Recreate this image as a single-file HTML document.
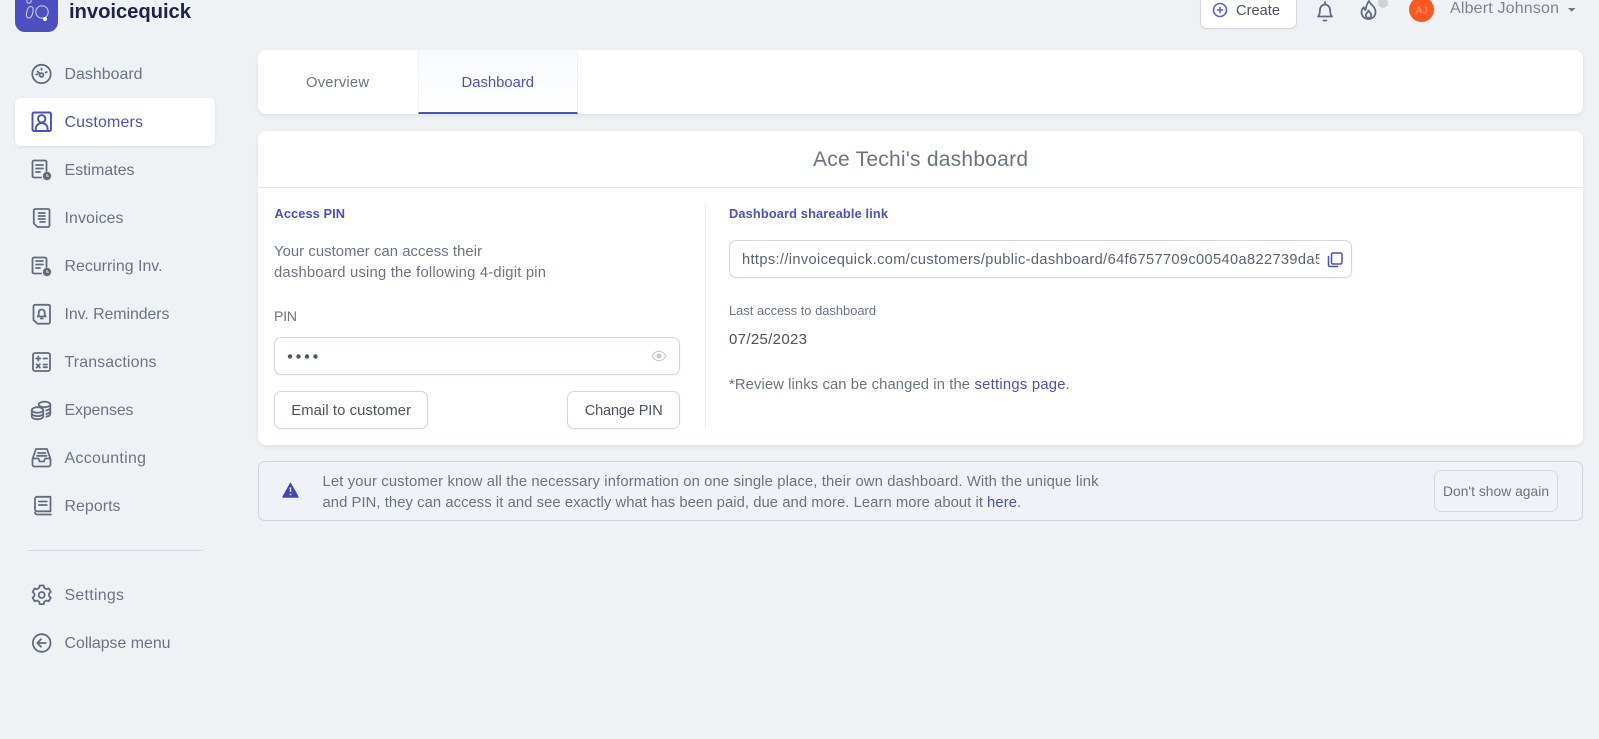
<!DOCTYPE html>
<html lang="en">
<head>
<meta charset="utf-8">
<title>invoicequick</title>
<style>
html,body{margin:0;padding:0;width:1599px;height:739px;overflow:hidden;background:#eff2f5;font-family:"Liberation Sans",sans-serif}
.b{position:absolute;box-sizing:border-box}
.card{background:#fff;border-radius:8px;box-shadow:0 2px 5px rgba(60,70,90,.09)}
.field{background:#fff;border:1px solid #d5d7df;border-radius:7px;box-shadow:0 1px 2px rgba(60,70,90,.06)}
svg.layer{position:absolute;left:0;top:0}
text{font-family:"Liberation Sans",sans-serif;fill:#6b7482}
.nav{font-size:15.9px}
.p{font-size:14.8px}
.d{fill:#4a5161}
.v{fill:#4b4fc4}
.i{fill:none;stroke:#626c7e;stroke-width:1.8;stroke-linecap:round;stroke-linejoin:round}
.ia{fill:none;stroke:#4b4fc4;stroke-width:1.9;stroke-linecap:round;stroke-linejoin:round}
</style>
</head>
<body>
<div class="b" style="left:15px;top:-11px;width:43px;height:43px;border-radius:10px;background:#4d50c0"></div>
<div class="b" style="left:15px;top:98px;width:200px;height:48px;background:#fff;border-radius:6px;box-shadow:0 1px 3px rgba(60,70,90,.1)"></div>
<div class="b" style="left:27px;top:550px;width:176px;height:1px;background:#d8dbe2"></div>

<div class="b field" style="left:1200px;top:-12px;width:97px;height:41px"></div>
<div class="b" style="left:1409px;top:-3px;width:25px;height:25px;border-radius:50%;background:#ff5722"></div>
<div class="b" style="left:1378px;top:-2px;width:10px;height:10px;border-radius:50%;background:#cfd1d5"></div>

<div class="b card" style="left:258px;top:50px;width:1325px;height:64px"></div>
<div class="b" style="left:417.500px;top:50px;width:160.500px;height:64px;background:linear-gradient(#f8faff,#fff);border-left:1px solid #eef0f5;border-right:1px solid #eef0f5;border-bottom:2px solid #4b4fc4"></div>

<div class="b card" style="left:258px;top:131px;width:1325px;height:314px"></div>
<div class="b" style="left:258px;top:187px;width:1325px;height:1px;background:#e5e7eb"></div>
<div class="b" style="left:704.500px;top:204px;width:1px;height:225px;background:#eceef2"></div>

<div class="b field" style="left:274px;top:337px;width:406px;height:38px"></div>
<div class="b field" style="left:274px;top:391px;width:154px;height:38px"></div>
<div class="b field" style="left:567px;top:391px;width:113px;height:38px"></div>
<div class="b field" style="left:729px;top:240px;width:623px;height:38px"></div>

<div class="b" style="left:258px;top:461px;width:1325px;height:60px;border:1px solid #d0d3e4;border-radius:7px;background:#eff2f6"></div>
<div class="b" style="left:1434px;top:470px;width:124px;height:42px;border:1px solid #d6d9e1;border-radius:7px"></div>

<svg class="layer" width="1599" height="739" viewBox="0 0 1599 739" xmlns="http://www.w3.org/2000/svg">
<defs><clipPath id="u"><rect x="740" y="245" width="579.500" height="28"/></clipPath></defs>

<!-- logo -->
<g fill="none" stroke="#c3c5ef" stroke-width="1.100">
<circle cx="29" cy="1" r="2.200"/>
<path d="M30.500 6.500c2.300 0 3 1.500 2.500 4.800-.6 3.800-2 6.700-4 6.700s-3-1.500-2.500-4.800C27 9.500 28.500 6.500 30.500 6.500z"/>
<circle cx="42" cy="12" r="6.200"/>
</g>
<circle cx="45" cy="19" r="2" fill="#fff"/>
<text x="69" y="18" font-size="20.300" font-weight="700" textLength="122" lengthAdjust="spacing" style="fill:#1e2247">invoicequick</text>

<!-- nav icons -->
<g class="i">
<circle cx="41.500" cy="74" r="9.200"/>
<circle cx="41.500" cy="75" r="1.900"/>
<path d="M39.800 73.600l-2.200-2M41.500 68.500v1.300M36.300 74.300h1.200M46.800 72l-1.200.6"/>
</g>
<g class="ia">
<rect x="32.500" y="112.500" width="18.500" height="18.500" rx="1.500"/>
<circle cx="41.700" cy="118.800" r="3.700"/>
<path d="M35.800 131v-2.200c0-3.300 2.600-5.800 5.900-5.800s5.900 2.500 5.900 5.800v2.200"/>
</g>
<g class="i">
<path d="M41 177.500h-7a1.500 1.500 0 0 1-1.500-1.500v-14a1.500 1.500 0 0 1 1.500-1.500h11a1.500 1.500 0 0 1 1.500 1.500v9"/>
<path d="M36 165h7M36 168.500h7M36 172h4"/>
<path d="M37 209h11a1.500 1.500 0 0 1 1.500 1.500v15a1.500 1.500 0 0 1-1.500 1.500H37.500l-3.700-3.500v-13a1.500 1.500 0 0 1 1.500-1.500h1.700z"/>
<path d="M38.500 213h6.500M38.500 216h6.500M38.500 219h6.500M40 222h5"/>
<path d="M41 273.500h-7a1.500 1.500 0 0 1-1.500-1.500v-13a1.500 1.500 0 0 1 1.500-1.500h11a1.500 1.500 0 0 1 1.500 1.500v8"/>
<path d="M36 261h7M36 264.500h7M36 268h4"/>
<path d="M36 304.800h12.500a1.500 1.500 0 0 1 1.500 1.500v15.900a1.500 1.500 0 0 1-1.500 1.500H37.500l-4-3.500v-13.900a1.500 1.500 0 0 1 1.500-1.500h1z"/>
<path d="M41.700 309.500c-2 0-3 1.400-3 3.500v2l-1 1.500h8l-1-1.500v-2c0-2.100-1-3.500-3-3.500zM40.700 318.500h2"/>
<rect x="33" y="353" width="17" height="18" rx="2"/>
<path d="M36.200 358.500h4.200M38.300 356.400v4.200M43.500 358.500h3.500M36.600 364.300l3.300 3.300M39.900 364.300l-3.300 3.300M43.500 364.500h3.500M43.500 367.200h3.500"/>
<ellipse cx="44.500" cy="404.500" rx="5.800" ry="2.800"/>
<path d="M50.300 404.500v9.500c0 1.200-1.700 2.200-4 2.600"/>
<ellipse cx="37.500" cy="410" rx="5.700" ry="2.800"/>
<path d="M31.800 410v6.500c0 1.500 2.600 2.800 5.700 2.800s5.700-1.300 5.700-2.800V410M31.800 413.300c0 1.500 2.600 2.800 5.700 2.800s5.700-1.300 5.700-2.800M50.300 408c0 1-1.800 2-4 2.500M50.300 411.500c0 1-1.800 2-4 2.500"/>
<path d="M36 449h11l3.500 10v5.500a2 2 0 0 1-2 2h-14a2 2 0 0 1-2-2V459z"/>
<path d="M33 458.500h5.500l1 3h4.500l1-3h5M38 453h7.500M37 455.800h9.500"/>
<path d="M37 496.800h13.500v14.500H37a2 2 0 0 1-2-2v-10.500a2 2 0 0 1 2-2z"/>
<path d="M35 512.500a2 2 0 0 0 2 2h14M38.800 501.500h8M38.800 505h8"/>
<path d="M39.700 585.500h4l.6 2.400 2.100 1.200 2.400-.7 2 3.500-1.800 1.700v2.400l1.800 1.700-2 3.500-2.400-.7-2.100 1.200-.6 2.400h-4l-.6-2.400-2.100-1.200-2.400.7-2-3.500 1.800-1.700v-2.400l-1.800-1.700 2-3.500 2.400.7 2.100-1.200z"/>
<circle cx="41.700" cy="595" r="3"/>
<circle cx="41.700" cy="643" r="8.800"/>
<path d="M45.800 643h-8M41 639.300L37.300 643l3.700 3.700"/>
</g>
<circle cx="47" cy="176" r="4.200" fill="#626c7e"/>
<path d="M47 174v2.200h1.700" fill="none" stroke="#eef1f5" stroke-width=".9"/>
<circle cx="47" cy="272" r="4.200" fill="#626c7e"/>
<path d="M47 270v2.200h1.700" fill="none" stroke="#eef1f5" stroke-width=".9"/>

<!-- nav labels -->
<g class="nav">
<text x="64.500" y="79" textLength="78" lengthAdjust="spacing">Dashboard</text>
<text x="64.500" y="127" textLength="78.500" lengthAdjust="spacing" class="v">Customers</text>
<text x="64.500" y="175" textLength="70" lengthAdjust="spacing">Estimates</text>
<text x="64.500" y="223" textLength="59" lengthAdjust="spacing">Invoices</text>
<text x="64.500" y="271" textLength="98" lengthAdjust="spacing">Recurring Inv.</text>
<text x="64.500" y="319" textLength="105" lengthAdjust="spacing">Inv. Reminders</text>
<text x="64.500" y="367" textLength="92" lengthAdjust="spacing">Transactions</text>
<text x="64.500" y="415" textLength="69" lengthAdjust="spacing">Expenses</text>
<text x="64.500" y="463" textLength="81.500" lengthAdjust="spacing">Accounting</text>
<text x="64.500" y="511" textLength="56" lengthAdjust="spacing">Reports</text>
<text x="64.500" y="600" textLength="59.500" lengthAdjust="spacing">Settings</text>
<text x="64.500" y="648" textLength="106" lengthAdjust="spacing">Collapse menu</text>
</g>

<!-- top bar -->
<circle cx="1220" cy="10" r="6.500" fill="none" stroke="#5b5fe0" stroke-width="1.600"/>
<path d="M1220 6.800v6.400M1216.800 10h6.400" stroke="#5b5fe0" stroke-width="1.500" fill="none"/>
<text x="1236" y="15" font-size="14.600" textLength="44" lengthAdjust="spacing" class="d">Create</text>
<g class="i">
<path d="M1318 16.500c1.500-1.400 1.800-2.800 1.800-5.500 0-3.800 2.200-6.500 5.200-6.500s5.200 2.700 5.200 6.500c0 2.700.3 4.100 1.800 5.500z"/>
<path d="M1325 2v2.500M1323.500 20.500h3"/>
<path d="M1369 1c.6 3.200 6.500 5 6.500 11 0 4-3 7-7 7s-7-3-7-6.700c0-2.300 1-3.800 2.300-5 .2 1.500.8 2.300 1.700 2.700C1366 7 1367 3.500 1369 1z"/>
<path d="M1368.500 10.500c.4 1.500 2.700 2.300 2.700 4.700a2.700 2.700 0 0 1-5.400 0c0-1.800 2.200-3 2.700-4.700z"/>
</g>
<text x="1421.500" y="13.500" font-size="10" text-anchor="middle" style="fill:#ffa27c">AJ</text>
<text x="1450" y="13" font-size="16" textLength="109" lengthAdjust="spacing" style="fill:#7c8391">Albert Johnson</text>
<path d="M1568 8h7.500l-3.750 3.800z" fill="#6b7482"/>

<!-- tabs -->
<text x="306" y="87" font-size="14.800" textLength="63" lengthAdjust="spacing">Overview</text>
<text x="461.500" y="87" font-size="14.800" textLength="72.500" lengthAdjust="spacing" class="v">Dashboard</text>

<!-- main card -->
<text x="813" y="166" font-size="21" textLength="215" lengthAdjust="spacing">Ace Techi's dashboard</text>
<text x="274.500" y="218" font-size="12.800" font-weight="700" textLength="70.500" lengthAdjust="spacing" class="v">Access PIN</text>
<text x="274" y="256" class="p" textLength="208" lengthAdjust="spacing">Your customer can access their</text>
<text x="274" y="277" class="p" textLength="272" lengthAdjust="spacing">dashboard using the following 4-digit pin</text>
<text x="274" y="321" font-size="14.200" textLength="23" lengthAdjust="spacing">PIN</text>
<g fill="#4f5666"><circle cx="290" cy="356.500" r="2.200"/><circle cx="298.500" cy="356.500" r="2.200"/><circle cx="307" cy="356.500" r="2.200"/><circle cx="315.500" cy="356.500" r="2.200"/></g>
<path d="M652 356c2-3.300 4.400-4.700 7-4.700s5 1.400 7 4.700c-2 3.300-4.400 4.700-7 4.700s-5-1.400-7-4.700z" fill="none" stroke="#c6c9cf" stroke-width="1.200"/>
<circle cx="659" cy="356" r="2.600" fill="#c6c9cf"/>
<text x="291.300" y="415" class="p d" textLength="119.700" lengthAdjust="spacing">Email to customer</text>
<text x="584.700" y="415" font-size="14.500" class="d" textLength="78" lengthAdjust="spacing">Change PIN</text>

<text x="729" y="218" font-size="12.800" font-weight="700" textLength="159" lengthAdjust="spacing" class="v">Dashboard shareable link</text>
<g clip-path="url(#u)"><text x="742" y="264" font-size="14.600" textLength="581" lengthAdjust="spacing" style="fill:#5a6272">https://invoicequick.com/customers/public-dashboard/64f6757709c00540a822739da5</text></g>
<rect x="1331.500" y="253" width="10.500" height="11" rx="1.500" fill="none" stroke="#4b4fc4" stroke-width="1.500"/>
<path d="M1328.500 256v9a1.500 1.500 0 0 0 1.500 1.500h8" fill="none" stroke="#4b4fc4" stroke-width="1.500"/>
<text x="729" y="315" font-size="12.900" textLength="147" lengthAdjust="spacing">Last access to dashboard</text>
<text x="729" y="344" font-size="15" class="d" textLength="78" lengthAdjust="spacing">07/25/2023</text>
<text x="729" y="389" class="p" textLength="241" lengthAdjust="spacing">*Review links can be changed in the</text>
<text x="974.500" y="389" class="p v" textLength="91" lengthAdjust="spacing">settings page</text>
<text x="1065.500" y="389" class="p">.</text>

<!-- alert -->
<path d="M290.500 483.500l7.500 13.500h-15z" fill="#4545b8" stroke="#4545b8" stroke-width="1.400" stroke-linejoin="round"/>
<path d="M290.500 487.500v4.500M290.500 493.800v1.300" stroke="#eef1f5" stroke-width="1.500" fill="none"/>
<text x="322.500" y="486" class="p" textLength="776" lengthAdjust="spacing">Let your customer know all the necessary information on one single place, their own dashboard. With the unique link</text>
<text x="322.500" y="507" class="p" textLength="660.500" lengthAdjust="spacing">and PIN, they can access it and see exactly what has been paid, due and more. Learn more about it</text>
<text x="987" y="507" class="p v" textLength="30" lengthAdjust="spacing">here</text>
<text x="1017" y="507" class="p">.</text>
<text x="1443" y="496" font-size="13.800" textLength="106" lengthAdjust="spacing">Don't show again</text>
</svg>
</body>
</html>
